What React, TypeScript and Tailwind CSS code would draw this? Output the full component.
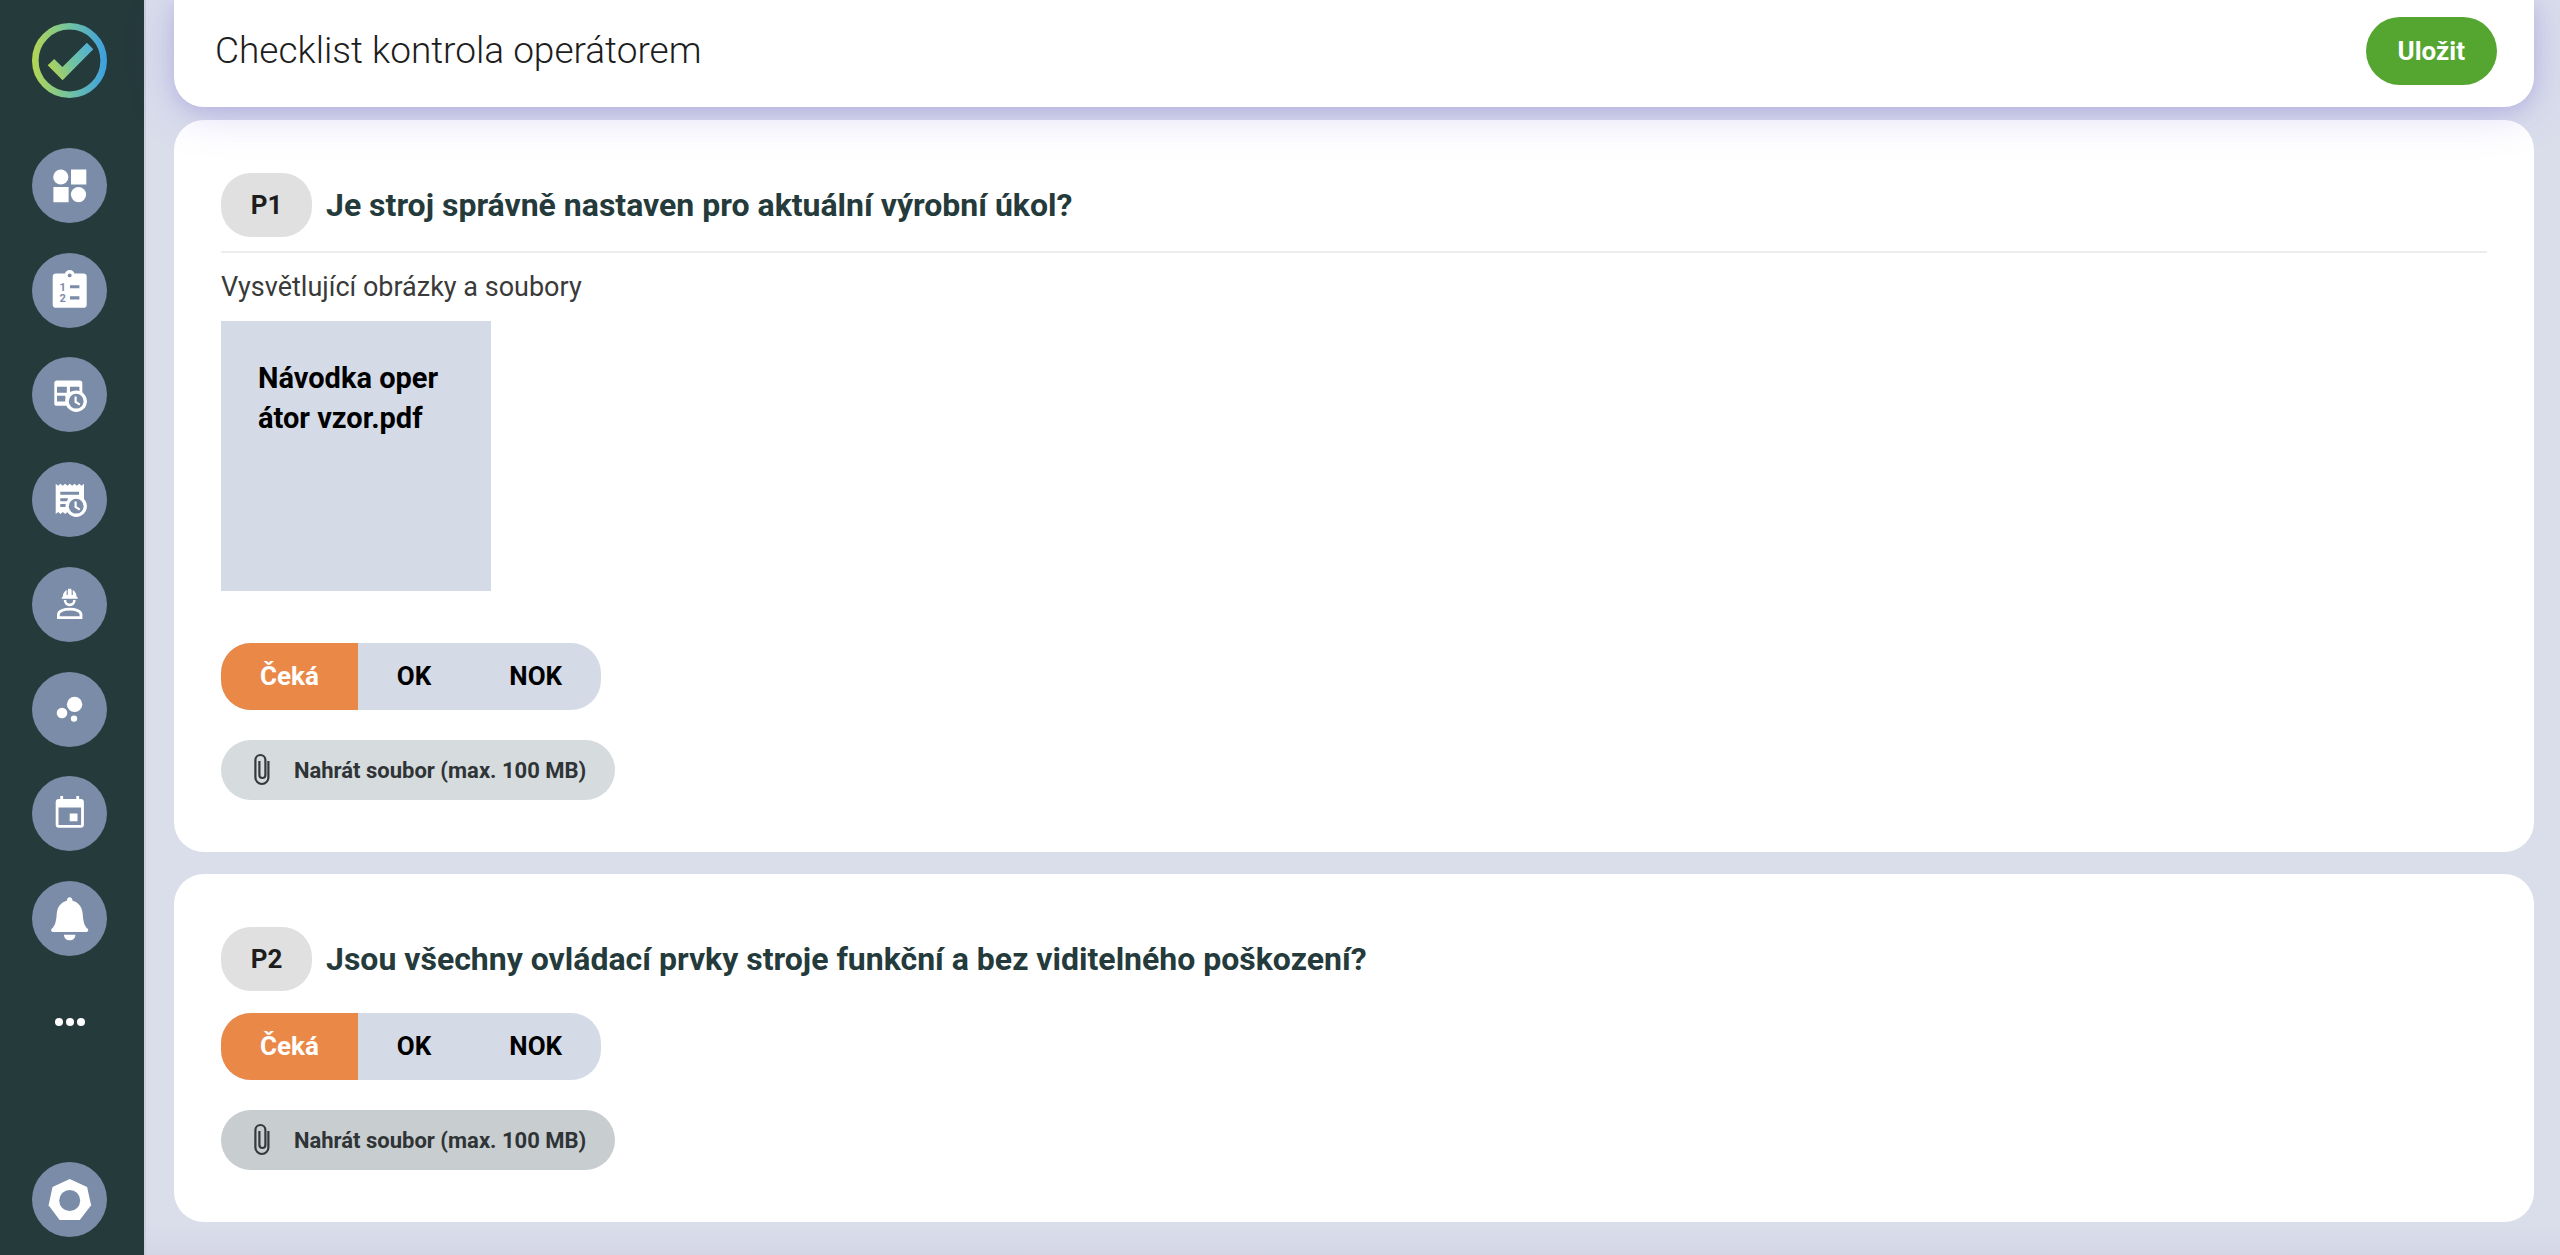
import { useState } from 'react';
import type { ReactNode } from 'react';

type Question = {
    id: string;
    title: string;
    files: string[];
    uploadClass: string;
};

const questions: Question[] = [
    {
        id: 'P1',
        title: 'Je stroj správně nastaven pro aktuální výrobní úkol?',
        files: ['Návodka operátor vzor.pdf'],
        uploadClass: 'bg-[#d6dbde]',
    },
    {
        id: 'P2',
        title: 'Jsou všechny ovládací prvky stroje funkční a bez viditelného poškození?',
        files: [],
        uploadClass: 'bg-[#c8cdd0]',
    },
];

const answers = ['Čeká', 'OK', 'NOK'];

const SLATE = '#7a8ca7';

const Clock = () => (
    <>
        <circle cx="44.2" cy="44.2" r="10.7" />
        <circle cx="44.2" cy="44.2" r="7.4" fill={SLATE} />
        <path d="M43.6 39.4v5.6l4.2 2.6" fill="none" stroke="white" strokeWidth="2.2" />
    </>
);

const navItems: { label: string; icon: ReactNode }[] = [
    {
        label: 'Přehled',
        icon: (
            <>
                <circle cx="28.8" cy="29" r="7.6" />
                <path d="M39 21.4h15.3v15H39zM21.4 39h15.2v15.3H21.4z" />
                <circle cx="46.5" cy="46.6" r="7.6" />
            </>
        ),
    },
    {
        label: 'Checklisty',
        icon: (
            <>
                <circle cx="37.7" cy="22" r="5" />
                <rect x="20.7" y="20.4" width="34" height="34.4" rx="3.4" />
                <circle cx="37.7" cy="22.4" r="1.9" fill={SLATE} />
                <path d="M38 32.2h9.4v3.1H38zM38 43.3h9.4v3.1H38z" fill={SLATE} />
                <g fill={SLATE} fontSize="11" fontWeight="700">
                    <text x="27.6" y="37.8">1</text>
                    <text x="27.6" y="49.2">2</text>
                </g>
            </>
        ),
    },
    {
        label: 'Plán',
        icon: (
            <>
                <rect x="22.3" y="23.4" width="28" height="25.4" rx="2.6" />
                <path d="M25 29.8h9.8v6H25zM38 29.8h9.4v5H38zM25 38.8h8.4v5.8H25z" fill={SLATE} />
                <Clock />
            </>
        ),
    },
    {
        label: 'Historie',
        icon: (
            <>
                <path d="M23.7 21.8l2.4 2 2.3-2 2.4 2 2.3-2 2.4 2 2.3-2 2.4 2 2.3-2 2.4 2 2.3-2 2.4 2 2.4-2V52l-2.4-2-2.3 2-2.4-2-2.3 2-2.4-2-2.3 2-2.4-2-2.3 2-2.4-2-2.3 2-2.4-2-2.4 2z" />
                <path d="M28.3 29.7H47v3H28.3zM28.3 36.2h7.5v3h-7.5zM28.3 42h6v3h-6z" fill={SLATE} />
                <Clock />
            </>
        ),
    },
    {
        label: 'Pracovníci',
        icon: (
            <>
                <path d="M29.8 31.8v-1.9h1c0-3 1.3-5.5 3.4-6.700V22.900h1.900v-1.100h3.200v1.100h1.900v.3c2.100 1.200 3.400 3.700 3.400 6.700h1v1.900z" />
                <path d="M35.200 23v5M40.200 23v5" fill="none" stroke={SLATE} strokeWidth="1.1" />
                <path d="M33 33c0 3 2 4.900 4.700 4.900s4.700-1.900 4.700-4.900" fill="none" stroke="white" strokeWidth="2.6" />
                <path d="M26.4 50.7v-3.200c0-3.600 5.600-5.400 11.300-5.400S49 43.900 49 47.500v3.200z" fill="none" stroke="white" strokeWidth="2.8" />
            </>
        ),
    },
    {
        label: 'Statistiky',
        icon: (
            <>
                <circle cx="42.6" cy="32.4" r="7.7" />
                <circle cx="30" cy="41" r="5.3" />
                <circle cx="42" cy="46.6" r="3.2" />
            </>
        ),
    },
    {
        label: 'Kalendář',
        icon: (
            <>
                <path d="M28.3 20h2.8v5h-2.8zM44.3 20h2.8v5h-2.8z" />
                <rect x="25.1" y="24.5" width="25.4" height="25.8" rx="1.8" fill="none" stroke="white" strokeWidth="2.8" />
                <path d="M25 24h25.6v7.4H25zM37.7 37.4h7.8v7.8h-7.8z" />
            </>
        ),
    },
    {
        label: 'Oznámení',
        icon: (
            <>
                <path d="M37.7 16.3c1.7 0 2.8 1.3 2.8 3.4 6.4 1.6 9.7 6.600 10.200 13.300.5 7.500 1.600 11.600 4.700 14.600 1.500 1.500.9 3.400-.9 3.400H20.900c-1.800 0-2.400-1.900-.9-3.400 3.100-3 4.200-7.100 4.700-14.600.5-6.700 3.800-11.700 10.200-13.300 0-2.100 1.100-3.400 2.800-3.400z" />
                <path d="M32 53.7h11.4c0 3.4-2.3 5.6-5.7 5.6S32 57.1 32 53.7z" />
            </>
        ),
    },
];

function NavButton({ label, children }: { label: string; children: ReactNode }) {
    return (
        <button type="button" aria-label={label} className="size-[75px] rounded-full bg-[#7a8ca7]">
            <svg viewBox="0 0 75 75" fill="white" className="size-full">
                {children}
            </svg>
        </button>
    );
}

function Sidebar() {
    return (
        <aside className="flex w-36 shrink-0 flex-col bg-[#243a3b] pt-[23px] pr-[37px] pb-[18px] pl-8">
            <a href="#" aria-label="Domů" className="block">
                <svg viewBox="0 0 75 75" className="size-[75px]">
                    <defs>
                        <linearGradient id="ring" x1="0" x2="75" y1="37" y2="37" gradientUnits="userSpaceOnUse">
                            <stop offset="0" stopColor="#b5d652" />
                            <stop offset="0.5" stopColor="#71c3a1" />
                            <stop offset="1" stopColor="#3c9fe2" />
                        </linearGradient>
                        <linearGradient id="tick" x1="16" x2="61" y1="48" y2="26" gradientUnits="userSpaceOnUse">
                            <stop offset="0" stopColor="#b5d652" />
                            <stop offset="0.5" stopColor="#71c3a1" />
                            <stop offset="1" stopColor="#4fb0d6" />
                        </linearGradient>
                    </defs>
                    <circle cx="37.5" cy="37.5" r="34.2" fill="none" stroke="url(#ring)" strokeWidth="6.6" />
                    <path d="M15.7 42.3l6.5-6.4 8.2 8.2L54.9 19.7l6.4 6.5-30.7 31z" fill="url(#tick)" />
                </svg>
            </a>
            <nav className="mt-[50px] flex h-[808px] flex-col justify-between">
                {navItems.map((item) => (
                    <NavButton key={item.label} label={item.label}>
                        {item.icon}
                    </NavButton>
                ))}
            </nav>
            <button type="button" aria-label="Další" className="mt-14 flex h-[19px] items-center justify-center gap-[3px]">
                <span className="size-2 rounded-full bg-white" />
                <span className="size-2 rounded-full bg-white" />
                <span className="size-2 rounded-full bg-white" />
            </button>
            <div className="mt-auto flex">
                <NavButton label="Nastavení">
                    <path d="M37.7 17l17.4 8 4 18.3L47.8 58H27.6L16.6 43.3l3.9-18.3z" />
                    <circle cx="37.7" cy="38.5" r="10.5" fill={SLATE} />
                </NavButton>
            </div>
        </aside>
    );
}

function AnswerSwitch({ name }: { name: string }) {
    const [selected, setSelected] = useState('Čeká');

    return (
        <div role="group" aria-label={name} className="flex w-fit overflow-hidden rounded-[30px] bg-[#d4dbe7]">
            {answers.map((answer) => (
                <button
                    key={answer}
                    type="button"
                    aria-pressed={selected === answer}
                    onClick={() => setSelected(answer)}
                    className={
                        selected === answer
                            ? 'h-[67px] bg-[#ea8947] px-[39px] text-[26px] font-bold text-white'
                            : 'h-[67px] px-[39px] text-[26px] font-bold text-black'
                    }
                >
                    {answer}
                </button>
            ))}
        </div>
    );
}

function QuestionCard({ question }: { question: Question }) {
    return (
        <section className="rounded-[30px] bg-white px-[47px] pt-[53px] pb-[52px]">
            <div className="flex items-center gap-[14px]">
                <span className="flex h-16 w-[91px] items-center justify-center rounded-[30px] bg-[#e0e0e0] text-[26px] font-bold text-[#1d1d1d]">
                    {question.id}
                </span>
                <h2 className="text-[32px] leading-10 font-bold text-[#243a3b]">{question.title}</h2>
            </div>

            {question.files.length > 0 && (
                <div className="mt-[14px] mb-[52px] border-t-2 border-[#ececec] pt-[14px]">
                    <p className="text-[27px] leading-10 text-[#3a3a3a]">Vysvětlující obrázky a soubory</p>
                    <div className="mt-[14px] flex gap-4">
                        {question.files.map((file) => (
                            <a
                                key={file}
                                href="#"
                                className="size-[270px] bg-[#d4dbe7] pt-[37px] pr-11 pl-[37px] text-[29px] leading-10 font-bold break-all text-black"
                            >
                                {file}
                            </a>
                        ))}
                    </div>
                </div>
            )}

            <div className={question.files.length > 0 ? '' : 'mt-[22px]'}>
                <AnswerSwitch name={question.title} />
            </div>

            <label
                className={`mt-[30px] flex h-[60px] w-fit cursor-pointer items-center rounded-[30px] px-[29px] ${question.uploadClass}`}
            >
                <svg viewBox="0 0 24 40" fill="none" stroke="#333a3c" strokeWidth="2.2" className="h-10 w-6">
                    <path d="M18.4 11v16.5a6.5 6.5 0 0 1-13 0V10a5 5 0 0 1 10 0v15a3 3 0 0 1-6 0V11" />
                </svg>
                <span className="ml-5 text-[22px] font-bold text-[#2f3436]">Nahrát soubor (max. 100 MB)</span>
                <input type="file" className="sr-only" />
            </label>
        </section>
    );
}

export default function App() {
    return (
        <div className="flex min-h-screen bg-[#dadeeb] font-[Roboto,sans-serif]">
            <Sidebar />
            <main className="min-w-0 flex-1 border-l-2 border-[#c9cfdc] bg-[linear-gradient(to_top,#d4d6e5,#dadeeb_32px)] pr-[26px] pl-7">
                <div className="rounded-b-[30px] shadow-[0_6px_14px_rgba(110,95,190,0.14)]">
                    <header className="relative z-10 flex h-[107px] items-center justify-between rounded-b-[30px] bg-white pr-[37px] pb-[5px] pl-[41px] shadow-[0_4px_46px_rgba(110,95,220,0.28)]">
                        <h1 className="text-[37px] font-light text-[#1d1d1d]">Checklist kontrola operátorem</h1>
                        <button
                            type="button"
                            className="h-[68px] rounded-full bg-[#54a630] px-8 text-[26px] font-bold text-white"
                        >
                            Uložit
                        </button>
                    </header>
                </div>
                <div className="mt-[13px] flex flex-col gap-[22px] pb-8">
                    {questions.map((question) => (
                        <QuestionCard key={question.id} question={question} />
                    ))}
                </div>
            </main>
        </div>
    );
}
